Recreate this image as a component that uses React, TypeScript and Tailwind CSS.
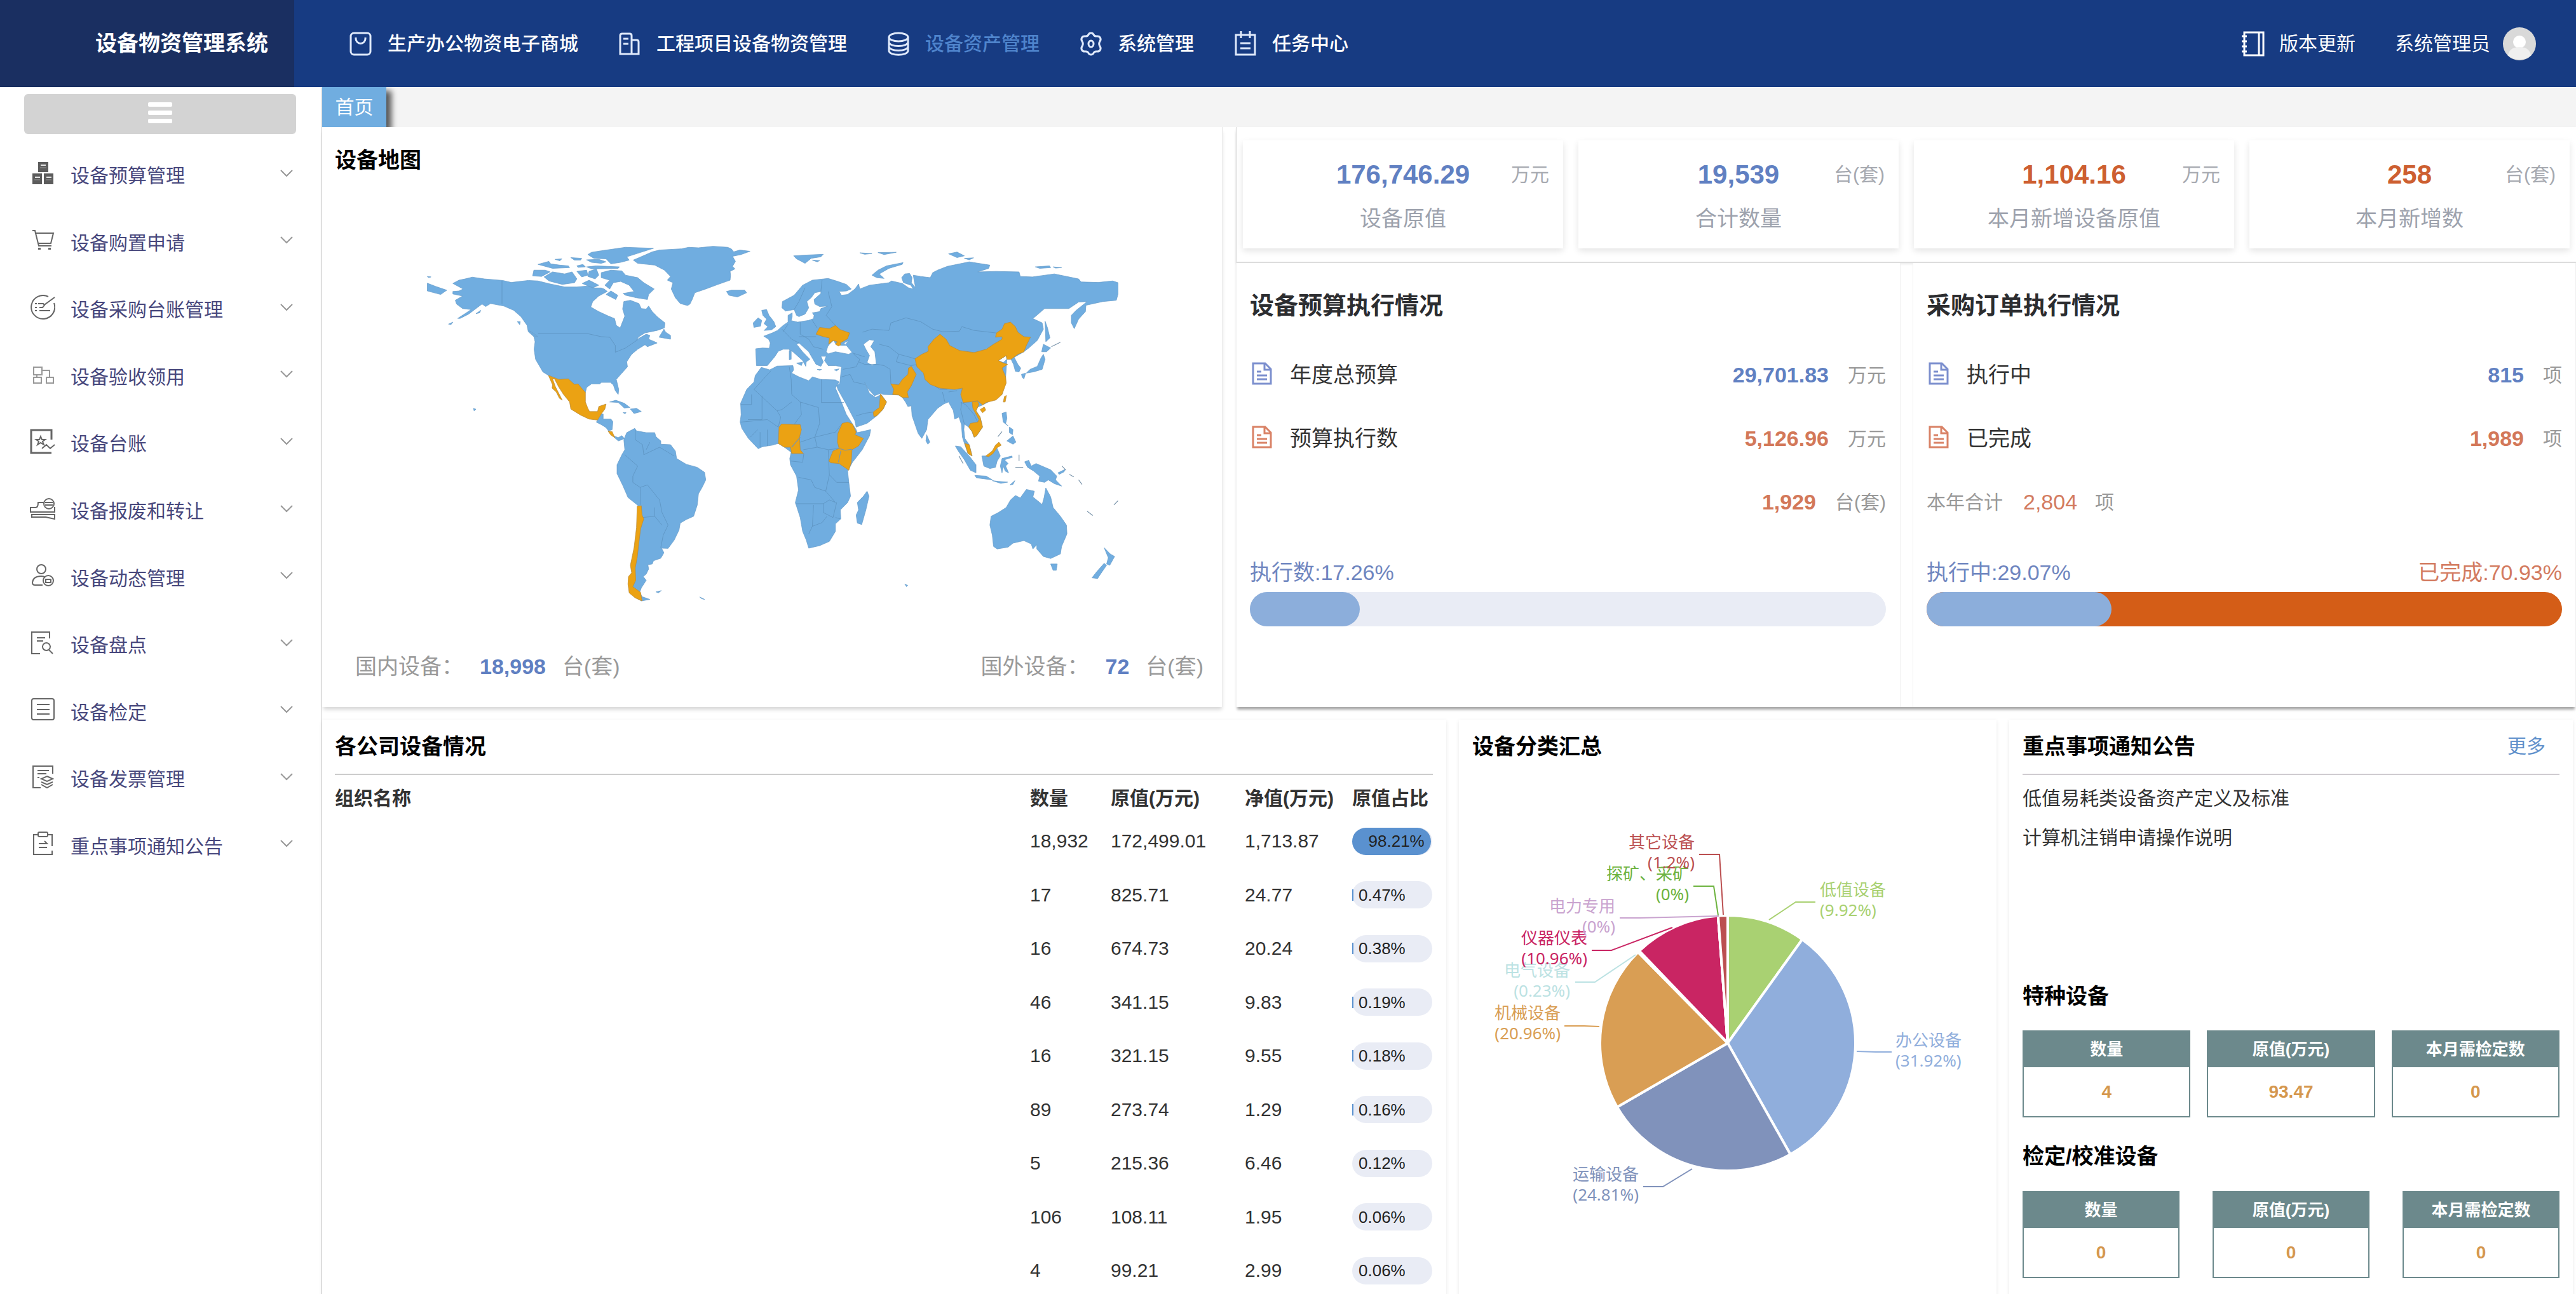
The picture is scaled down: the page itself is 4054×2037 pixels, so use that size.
import React from "react";

const FONT = "font-['Liberation_Sans','Noto_Sans_CJK_SC',sans-serif]";

/* ---------- header icons ---------- */

const navIcon = "h-10 w-9 shrink-0 fill-none stroke-[#dfe9fb] stroke-3";

const BagIcon = () => (
  <svg viewBox="0 0 36 40" className={navIcon}>
    <rect x="2" y="3" width="31" height="34" rx="5" />
    <path d="M10 10v2a7.5 7.5 0 0 0 15 0v-2" />
  </svg>
);
const BuildingIcon = () => (
  <svg viewBox="0 0 36 40" className={navIcon}>
    <path d="M3 36V7q0-3 3-3h12q3 0 3 3v29zM21 14h8q3 0 3 3v19H21M8 12h8M8 20h8" />
  </svg>
);
const DatabaseIcon = () => (
  <svg viewBox="0 0 36 40" className={navIcon}>
    <ellipse cx="18" cy="9.500" rx="15" ry="6.500" />
    <path d="M3 9.500v21c0 9 30 9 30 0v-21M3 17c0 8.500 30 8.500 30 0M3 24c0 8.500 30 8.500 30 0" />
  </svg>
);
const GearIcon = () => (
  <svg viewBox="0 0 36 40" className={navIcon}>
    <path d="M18 3q3 0 4 2.500 1.500 3 5 2.500 4-.5 5.500 2.500t-.5 5.500q-2.500 4 0 8 2 2.500.5 5.500T27 32q-3.500-.5-5 2.500Q21 37 18 37t-4-2.500Q12.500 31.500 9 32q-4 .5-5.500-2.500T4 24q2.500-4 0-8-2-2.500-.5-5.500T9 8q3.500.5 5-2.500Q15 3 18 3z" />
    <ellipse cx="18" cy="20" rx="4" ry="5" />
  </svg>
);
const ClipIcon = () => (
  <svg viewBox="0 0 36 40" className={navIcon}>
    <path d="M3 6h30v31H3zM11 0v11M25 0v11M10 19h16M10 27h16" />
  </svg>
);
const NotebookIcon = () => (
  <svg viewBox="0 0 38 40" className="h-10 w-[38px] shrink-0 fill-none stroke-white stroke-3">
    <path d="M5 2h30v36H5zM28 2v36M1 8h8M1 16h8M1 24h8M1 32h8" />
  </svg>
);
const Avatar = () => (
  <svg viewBox="0 0 52 52" className="size-[52px]">
    <circle cx="26" cy="26" r="26" fill="#d9d9d9" />
    <circle cx="26" cy="23" r="10" fill="#fff" />
    <path d="M8 44c2-10 9-13 18-13s16 3 18 13c-9 9-27 9-36 0z" fill="#efefef" />
  </svg>
);

const NAV = [
  { label: "生产办公物资电子商城", Icon: BagIcon },
  { label: "工程项目设备物资管理", Icon: BuildingIcon },
  { label: "设备资产管理", Icon: DatabaseIcon, active: true },
  { label: "系统管理", Icon: GearIcon },
  { label: "任务中心", Icon: ClipIcon },
];

/* ---------- sidebar ---------- */

const MENU: { label: string; icon: React.ReactNode }[] = [
  {
    label: "设备预算管理",
    icon: (
      <>
        <path fill="#5c5c5c" stroke="none" d="M13 2h16v16H13zM4 20h15v17H4zM22 20h15v17H22z" />
        <path stroke="#e6e6e6" d="M17 7h8M8 26h8M26 26h8" />
        <path stroke="#999" strokeWidth="1" d="M16 11h10M7 30h9M25 30h9" />
      </>
    ),
  },
  {
    label: "设备购置申请",
    icon: (
      <>
        <path d="M4 5h4l6 24h20M8 9h29l-4 16H13" />
        <path d="M13 32h4v3h-4zM29 32h4v3h-4z" fill="#666" stroke="none" />
      </>
    ),
  },
  {
    label: "设备采购台账管理",
    icon: <path d="M29 3A18.500 18.500 0 1 0 38 13M39 4 24 15l-4 5h-5M8 14h3M13 14h8l2 2M8 20h3M8 25h3M15 25h17" />,
  },
  {
    label: "设备验收领用",
    icon: <path stroke="#999" d="M6 9h13v12H6zM6 25h12v9H6zM26 25h11v9H26zM19 14h12v11M11 21v4" />,
  },
  {
    label: "设备台账",
    icon: (
      <>
        <path d="M34 17V2H2v36h32" strokeWidth="3" />
        <path d="m17 12 2 5h5l-4 3 2 5-5-3-5 3 2-5-4-3h5zM19 31l7-6 6 6 7-6" />
      </>
    ),
  },
  {
    label: "设备报废和转让",
    icon: (
      <>
        <path d="M22 10h-9q0 8-4 8H1v7h38v-8M3 29h36v7l-14-3H3z" />
        <circle cx="30" cy="12" r="8" />
        <path d="M24 10h12M24 14h12" />
      </>
    ),
  },
  {
    label: "设备动态管理",
    icon: (
      <>
        <circle cx="18" cy="10" r="7" />
        <path d="M20 35H8q-4 0-4-4 1-10 14-10 4 0 6 2" />
        <circle cx="29" cy="28" r="8" />
        <path d="M25 26h8v5h-8z" />
      </>
    ),
  },
  {
    label: "设备盘点",
    icon: (
      <>
        <path d="M31 13V3H3v34h13M11 12h13M11 17h10" />
        <circle cx="26" cy="26" r="6" />
        <path d="m30 31 6 6" />
      </>
    ),
  },
  {
    label: "设备检定",
    icon: (
      <>
        <rect x="3" y="3" width="35" height="33" rx="3" />
        <path d="M11 12h20M11 20h20M11 27h20" />
      </>
    ),
  },
  {
    label: "设备发票管理",
    icon: (
      <>
        <path d="M36 15V3H5v34h12M12 10h18M12 15h14M12 21h3" />
        <path d="m27 19 9 4-9 4-9-4zM18 28l9 4 9-4M18 32l9 5 9-5" />
      </>
    ),
  },
  {
    label: "重点事项通知公告",
    icon: (
      <>
        <path d="M13 6H6v31h29v-6M28 6h7v18" />
        <rect x="13" y="2" width="15" height="7" rx="2" />
        <path d="M14 20h13l-4-4M27 26H14" />
      </>
    ),
  },
];

function Sidebar() {
  return (
    <aside className="flex w-[507px] shrink-0 flex-col border-r-2 border-[#e6e6e6]">
      <button
        type="button"
        aria-label="折叠菜单"
        className="mt-[11px] mr-[39px] ml-[38px] flex h-[63px] items-center justify-center rounded-md bg-[#d3d3d3]"
      >
        <span className="flex flex-col gap-[6px] pb-1">
          <span className="h-[7px] w-[38px] rounded-xs bg-white" />
          <span className="h-[7px] w-[38px] rounded-xs bg-white" />
          <span className="h-[7px] w-[38px] rounded-xs bg-white" />
        </span>
      </button>
      <nav className="mt-[13px] flex h-[1161px] flex-col">
        {MENU.map((m) => (
          <a key={m.label} href="#" className="flex flex-1 items-center pr-[44px] pl-[47px]">
            <svg viewBox="0 0 40 40" className="mb-2 size-10 shrink-0 fill-none stroke-[#666] stroke-2">
              {m.icon}
            </svg>
            <span className="ml-[24px] flex-1 text-[30px] text-[#47477c]">{m.label}</span>
            <svg viewBox="0 0 20 12" className="mb-2 h-3 w-5 fill-none stroke-[#999] stroke-2">
              <path d="m1 1 9 9 9-9" />
            </svg>
          </a>
        ))}
      </nav>
    </aside>
  );
}

/* ---------- world map ---------- */

const WEST_LAND =
  "M190 218 215 205 240 200 270 193 320 200 395 206 430 214 500 206 540 208 590 220 650 232 700 232 745 228 770 236 800 236 812 240 825 250 790 268 765 290 757 312 790 330 830 348 855 358 862 385 878 395 888 370 897 348 888 320 893 290 920 285 955 298 965 318 985 320 995 308 1010 330 1030 350 1062 375 1060 395 1030 405 980 415 955 430 945 442 985 420 1000 425 995 440 1020 450 1030 455 990 470 980 462 950 480 925 500 905 530 908 550 885 575 862 600 872 640 870 660 858 645 850 622 838 612 800 612 795 618 760 618 740 632 735 652 715 630 583 584 560 570 545 545 530 520 524 480 528 450 523 430 500 410 495 385 470 350 440 325 400 308 345 298 325 310 310 300 285 318 255 340 220 357 210 357 245 335 265 322 230 318 205 300 200 285 230 268 190 260 190 250 215 248 232 240Z" +
  "M785 762 800 738 808 738 808 758 840 758 848 768 845 800 830 805 820 792 800 780 780 770ZM852 825 870 832 885 824 895 835 885 840 870 845 855 832Z" +
  "M835 690 860 683 895 695 918 712 895 714 870 692ZM920 718 945 715 965 728 935 736ZM890 732 902 732 898 737Z" +
  "M893 840 905 812 938 795 945 805 985 812 1020 812 1025 828 1045 845 1045 858 1085 860 1105 885 1110 915 1150 938 1195 950 1225 970 1230 1000 1215 1030 1200 1055 1195 1100 1180 1145 1150 1158 1125 1172 1120 1200 1100 1240 1075 1273 1048 1272 1058 1290 1045 1312 1015 1322 1010 1335 992 1338 995 1355 985 1375 973 1385 985 1400 965 1430 958 1448 968 1465 1000 1476 965 1482 935 1465 925 1430 935 1380 940 1300 948 1200 955 1105 910 1070 890 1025 865 975 865 940 885 900 897 880 895 860Z" +
  "M932 125 980 105 1010 92 1040 85 1130 80 1160 74 1200 76 1260 70 1320 74 1335 80 1345 92 1370 85 1412 90 1375 103 1340 110 1352 130 1340 150 1350 160 1330 170 1332 185 1330 205 1280 222 1230 240 1185 255 1175 280 1165 300 1155 306 1125 298 1105 275 1088 240 1095 215 1072 205 1085 190 1060 165 1020 145 950 138Z" +
  "M745 103 760 94 800 88 900 74 1015 78 960 95 905 112 915 125 880 134 840 140 820 120 770 118ZM540 142 585 130 592 140 630 145 665 148 670 155 600 158ZM523 165 570 165 590 172 555 190 518 188ZM565 192 600 172 650 180 680 172 700 200 690 215 640 222 585 208ZM700 170 740 165 745 185 720 192ZM750 170 780 160 790 185 775 200 745 190ZM740 152 780 148 875 152 870 158 760 160ZM675 115 720 118 715 125 690 125ZM700 148 725 142 735 152 705 154ZM610 122 638 120 630 128ZM740 124 790 122 820 132 800 138 760 134ZM722 218 750 205 790 225 765 236Z" +
  "M800 175 840 165 885 168 900 185 950 195 975 215 1018 240 995 262 990 282 945 275 900 265 890 258 935 250 915 225 880 210 850 215 835 240 815 225 835 205 800 195ZM820 262 840 248 868 265 860 282 840 272Z" +
  "M1315 250 1335 245 1390 245 1398 255 1360 272 1325 265ZM1425 375 1445 355 1460 365 1455 388 1428 393ZM1460 325 1480 322 1490 345 1510 370 1518 390 1500 403 1470 405 1485 390 1470 378 1480 360 1465 345Z" +
  "M1038 432 1058 400 1065 412 1085 425 1085 440ZM85 217 120 230 165 245 140 262 85 248ZM502 405 520 415 540 430 525 427ZM455 370 467 370 465 382ZM172 380 190 372 182 382ZM275 715 285 719 277 725ZM1025 1446 1047 1441 1035 1450ZM1205 1466 1225 1476 1213 1473ZM85 190 100 192 90 195ZM285 338 305 325 300 335Z";

const WEST_ACCENT =
  "M583 584 625 600 665 598 690 620 705 618 715 630 735 652 735 690 745 715 752 728 785 728 790 708 820 698 815 718 800 738 785 762 750 758 715 742 675 718 670 690 645 660 625 630 608 598 600 598 612 630 628 660 640 683 628 675 615 650 598 635 600 622ZM828 806 845 808 856 832 840 822Z" +
  "M948 1105 965 1103 968 1140 975 1155 962 1195 955 1250 948 1310 940 1350 942 1400 930 1425 962 1448 968 1482 940 1470 915 1450 910 1415 912 1385 925 1370 920 1340 935 1270 945 1190Z";

const WEST_BORDERS =
  "M540 418H745L800 430 835 432 858 465V492L900 475 950 442M392 207V300M940 800 940 840 970 860 975 900 1040 870 1100 905M897 900 950 945 930 985 930 1010 960 1030 962 1100M960 1030 990 1020 1040 1080 1050 1130 1075 1180 1055 1220 1045 1270M968 1150 1020 1145 1050 1180M1020 1110 1020 1145M985 880 1000 850";

const EAST_LAND =
  "M-28 478 0 475 28 476 32 455 25 440 5 428 40 415 62 405 85 385 105 372 105 345 122 335 122 350 118 366 145 372 190 365 210 358 212 345 205 335 235 330 240 318 268 308 235 310 215 300 212 282 240 258 240 250 215 255 200 275 182 290 190 315 175 340 150 350 140 345 130 322 95 328 80 315 82 290 130 265 165 225 205 205 270 198 310 210 345 222 365 240 345 248 315 250 325 265 350 262 380 240 395 220 400 240 440 225 520 215 530 208 575 218 600 235 620 240 610 225 580 215 572 195 585 180 605 178 615 195 612 215 630 235 625 215 620 185 650 190 690 195 700 175 720 165 760 150 850 132 935 145 930 158 885 172 960 170 1055 172 1060 190 1110 192 1200 180 1300 200 1310 212 1380 214 1440 208 1462 215 1462 260 1455 285 1400 290 1330 305 1328 330 1300 360 1282 398 1270 375 1270 345 1290 325 1335 290 1300 292 1260 318 1160 318 1112 358 1150 375 1155 400 1130 445 1095 475 1075 490 1035 512 1050 540 1062 555 1055 570 1040 568 1032 540 1022 520 1005 520 1000 590 985 660 905 702 885 710 878 725 895 750 905 790 880 825 870 830 862 808 848 790 830 778 828 800 832 835 850 860 862 905 845 895 832 860 822 830 818 780 808 750 790 758 785 725 765 690 745 698 720 715 680 760 675 800 655 835 640 815 615 745 612 705 598 708 588 690 575 672 560 662 495 660 488 655 460 665 432 635 420 612 440 655 465 672 488 660 510 690 495 720 470 745 430 775 385 790 380 765 345 700 310 640 305 625 318 615 322 575 325 550 300 545 270 545 255 525 262 508 240 508 250 530 240 548 220 540 205 515 190 490 150 455 140 460 165 490 195 520 180 530 178 548 165 525 125 490 108 480 85 480 65 488 50 510 20 545-25 545Z" +
  "M-5 552 30 562 60 547 125 545 128 562 120 575 150 590 190 605 205 590 240 600 300 602 315 610 305 625 300 635 320 680 345 740 385 800 390 812 445 800 440 825 410 880 370 930 350 965 355 1010 362 1065 350 1090 320 1120 322 1155 300 1175 300 1205 275 1245 235 1262 190 1272 180 1240 165 1205 155 1150 135 1090 148 1040 140 985 115 940 112 915 118 890 90 870 65 855 40 862 0 868-18 876-58 835-85 795-92 770-88 740-90 695-65 640-35 610-30 585Z" +
  "M390 1090 415 1065 430 1045 438 1065 425 1120 408 1178 390 1172 385 1140 395 1120ZM675 820 688 850 680 858 672 845Z" +
  "M793 865 815 868 850 905 878 940 878 972 855 962 830 920 805 885ZM873 982 920 985 945 1000 880 992ZM945 1003 970 1006 1008 1009 980 1014ZM1018 1020 1038 1003 1030 1018ZM902 905 925 905 945 885 965 875 978 905 965 925 958 950 935 955 910 945ZM985 915 1025 905 1028 910 995 920 1010 935 1000 945 1012 972 998 965 990 945 985 972 978 945Z" +
  "M985 735 1002 730 1005 755 1000 775 1010 785 990 770ZM1005 845 1030 825 1042 850 1030 858ZM1015 790 1030 800 1028 820 1015 812ZM1078 928 1095 922 1105 945 1125 935 1185 960 1210 985 1205 1000 1230 1025 1200 1015 1175 1000 1160 1010 1135 1005 1140 985 1115 965 1090 950ZM1215 972 1245 958 1240 968 1220 978Z" +
  "M1002 1110 1020 1080 1040 1062 1060 1072 1085 1038 1118 1045 1112 1068 1150 1098 1158 1070 1165 1032 1185 1068 1195 1110 1225 1145 1250 1180 1252 1215 1230 1265 1225 1295 1185 1313 1155 1305 1128 1275 1128 1258 1112 1275 1105 1255 1075 1242 1030 1252 1010 1268 965 1275 950 1265 945 1220 935 1180 940 1145 970 1130ZM1185 1335 1212 1335 1208 1360 1195 1360ZM1405 1270 1430 1295 1448 1305 1428 1340 1415 1335 1422 1310ZM1355 1390 1375 1365 1405 1332 1415 1340 1390 1375 1378 1393Z" +
  "M1148 490 1155 460 1185 475 1168 490ZM1155 500 1162 520 1150 560 1115 570 1085 575 1100 560 1130 548 1145 515ZM1065 580 1082 575 1075 598 1068 592ZM1162 368 1172 395 1182 435 1165 450ZM128 108 180 105 250 102 240 112 200 118 175 138 140 120ZM205 125 235 127 225 132ZM450 185 475 165 510 148 578 135 575 142 520 158 480 180 500 198 470 195ZM765 100 800 93 830 108 800 115ZM830 118 868 116 850 124ZM1122 152 1180 148 1185 155 1140 158ZM1195 152 1230 155 1205 157Z" +
  "M110 485H118V520L110 522ZM140 535 165 532 160 545ZM225 560H243L235 564ZM295 562 315 558 305 566ZM585 1415 597 1420 592 1425ZM400 96 450 99 420 102ZM475 95 550 94 500 103Z";

const EAST_ACCENT =
  "M220 420 235 393 275 398 300 385 320 402 358 415 350 438 320 455 322 462 312 467 300 460 308 450 290 445 272 460 275 435 250 430Z" +
  "M627 518 655 500 682 488 680 470 705 440 730 420 755 440 770 465 810 485 870 493 920 480 950 460 985 440 985 430 958 432 962 415 985 400 995 378 1020 372 1040 390 1050 412 1075 430 1102 432 1085 465 1075 490 1050 500 1022 520 1005 520 1002 505 970 525 990 535 1008 540 985 555 1000 590 1002 615 985 660 960 682 920 692 905 702 885 685 850 690 825 692 815 660 822 635 790 640 730 635 690 620 668 600 662 575 635 550Z" +
  "M862 690 885 687 890 700 878 725 895 750 905 790 880 825 870 830 862 808 848 790 855 775 885 770 890 760 865 715ZM832 855 850 860 862 905 845 895ZM918 905 945 885 958 862 972 850 982 862 965 872 948 895 930 908ZM990 690 995 668 1003 664 998 690ZM895 720 912 710 918 722 905 733Z" +
  "M528 618 560 622 575 600 598 580 600 555 612 548 632 580 612 625 595 650 600 672 575 672 560 662 535 660 540 640ZM485 658 510 690 495 720 470 745 458 748 455 730 480 712Z" +
  "M65 855 68 790 78 778 155 780 160 800 152 830 155 880 168 895 120 895 115 870 90 870ZM328 775 350 770 370 778 385 810 380 820 415 835 395 865 368 880 365 930 355 962 315 935 280 932 273 925 290 885 315 875 308 850 310 815Z";

const EAST_SEAS =
  "M268 470 275 460 292 445 302 460 325 465 345 465 368 492 355 500 300 490 270 498 262 490ZM335 455 355 445 340 462ZM415 460 440 442 460 445 445 470 462 490 468 538 450 545 430 532 440 505 425 480ZM970 525 1002 505 1005 520 990 533Z";

const EAST_BORDERS =
  "M412 412 450 400 520 405 528 375 590 355 650 370 700 400 740 410 810 408 820 390 870 405 960 415M480 460 520 470 560 500 600 510 627 518M395 530 420 540 470 540 500 545 525 560 528 620M325 590 360 580 375 610 420 620M385 745 420 735 455 730M270 250 285 310 262 345 300 385M175 235 150 290 130 322M245 205 240 250M80 400 120 440 150 455M155 372 155 420 190 440 210 470 250 480M105 380 85 410M205 365 225 395M150 430 220 430M375 500 400 520 385 550 330 560M370 495 420 510M560 500 550 530 610 545 640 540M668 600 730 640 760 640M740 650 750 690M765 650 800 645M815 692 835 700 870 740 885 770M830 778 815 720 820 690" +
  "M110 550 118 600 120 660 155 690 230 712M242 600V692H335M230 712 235 775 215 830 225 870M155 690 160 740 130 780M35 565-35 640 60 725 80 720 120 690M60 725 75 750 65 790M-2 665V760H-60M-90 700H-45V660M-90 770 20 760 65 790M-10 870V810M20 865V800M-50 830-20 800M215 830 300 810 328 775M155 850 215 830M168 880 225 870 270 880 315 875M115 925 165 930 170 895M135 1095H250L275 1080 300 1090M210 1100 205 1185 190 1215M205 1185 245 1170 265 1145M148 990 200 1000 215 1030 260 1045 300 1090M270 880 275 980 305 1010 355 1010M275 980 260 1045M300 1150 320 1155M250 1095 250 1130 290 1150 305 1090";

const EAST_DETAIL =
  "M315 875 340 882 368 878M322 885 312 930M968 828 985 808M1188 470 1225 452M1262 978 1280 988M1300 1000 1314 1018M1335 1125 1358 1142M1445 1100 1462 1083M1055 900V925M1040 950H1072M808 905 825 935M1232 945 1248 962M120 870 155 830";

function WorldMap() {
  return (
    <svg viewBox="660 380 1110 570" className="h-[570px] w-full" role="img" aria-label="世界设备分布地图">
      <g strokeLinejoin="round" fill="none" stroke="#6a9fcb" strokeWidth="2">
        <g transform="translate(640 360) scale(.3827 .3954)">
          <path d={WEST_LAND} fill="#70ade0" />
          <path d={WEST_BORDERS} stroke="#5b91bf" />
          <path d={WEST_ACCENT} fill="#eba213" stroke="#b98b3a" />
        </g>
        <g transform="translate(1200 360) scale(.3827 .3954)">
          <path d={EAST_LAND} fill="#70ade0" />
          <path d={EAST_SEAS} fill="#fff" />
          <path d={EAST_BORDERS} stroke="#5b91bf" />
          <path d={EAST_ACCENT} fill="#eba213" stroke="#b98b3a" />
          <path d={EAST_DETAIL} stroke="#7b95ab" strokeWidth="3" />
        </g>
      </g>
    </svg>
  );
}

/* ---------- pie chart ---------- */

const SLICES = [
  { name: "低值设备", text: "(9.92%)", value: 9.92, color: "#a9d172", x: 2864, y: 1402, side: "start", line: "2784,1448 2826,1420 2857,1420" },
  { name: "办公设备", text: "(31.92%)", value: 31.92, color: "#90aedc", x: 2983, y: 1639, side: "start", line: "2922,1655 2952,1656 2977,1656" },
  { name: "运输设备", text: "(24.81%)", value: 24.81, color: "#8092bb", x: 2579, y: 1850, side: "end", line: "2663,1840 2617,1868 2586,1868" },
  { name: "机械设备", text: "(20.96%)", value: 20.96, color: "#d99e54", x: 2456, y: 1596, side: "end", line: "2517,1616 2493,1615 2462,1615" },
  { name: "电气设备", text: "(0.23%)", value: 0.23, color: "#bce2e3", x: 2471, y: 1529, side: "end", line: "2574,1503 2510,1546 2479,1546" },
  { name: "仪器仪表", text: "(10.96%)", value: 10.96, color: "#c92563", x: 2498, y: 1478, side: "end", line: "2632,1460 2536,1496 2505,1496" },
  { name: "电力专用", text: "(0%)", value: 0, color: "#c9a3cf", x: 2542, y: 1428, side: "end", line: "2705,1442 2580,1445 2549,1445" },
  { name: "探矿、采矿", text: "(0%)", value: 0, color: "#6db33f", x: 2658, y: 1377, side: "end", line: "2704,1441 2697,1395 2665,1395" },
  { name: "其它设备", text: "(1.2%)", value: 1.2, color: "#bb4f50", x: 2667, y: 1327, side: "end", line: "2712,1440 2706,1345 2674,1345" },
] as const;

function PieChart() {
  const cx = 2719;
  const cy = 1642;
  const r = 201;
  const at = (pct: number) => {
    const a = (pct / 100) * Math.PI * 2;
    return `${(cx + r * Math.sin(a)).toFixed(1)} ${(cy - r * Math.cos(a)).toFixed(1)}`;
  };
  let acc = 0;
  return (
    <svg
      viewBox="2296 1290 846 640"
      className="mt-[90px] h-[640px] w-full font-['Noto_Sans','Noto_Sans_CJK_SC',sans-serif] text-[26px]"
      role="img"
      aria-label="设备分类汇总饼图"
    >
      {SLICES.map((s) => {
        const from = acc;
        acc += s.value;
        return (
          <path
            key={s.name}
            d={`M${cx} ${cy}L${at(from)}A${r} ${r} 0 0 1 ${at(acc)}Z`}
            fill={s.color}
            stroke="#fff"
            strokeWidth="4"
            strokeLinejoin="round"
          />
        );
      })}
      {SLICES.map((s) => (
        <g key={s.name}>
          <polyline points={s.line} fill="none" stroke={s.color} strokeWidth="2" />
          <text x={s.x} y={s.y + 8} textAnchor={s.side} fill={s.color}>
            {s.name}
          </text>
          <text x={s.x} y={s.y + 40} textAnchor={s.side} fill={s.color}>
            {s.text}
          </text>
        </g>
      ))}
    </svg>
  );
}

/* ---------- shared parts ---------- */

function CardTitle({ children }: { children: React.ReactNode }) {
  return <h2 className="h-[50px] text-[34px] leading-[50px] font-bold text-black">{children}</h2>;
}

function DocIcon({ tone }: { tone: "blue" | "red" }) {
  return (
    <svg
      viewBox="0 0 32 36"
      className={
        "mb-1 h-9 w-8 shrink-0 fill-none stroke-3 " + (tone === "blue" ? "stroke-[#7c8fce]" : "stroke-[#d98266]")
      }
    >
      <path d="M2 2h19l9 9v23H2zM20 2v10h10M8 15h7M8 21h16M8 27h16" />
    </svg>
  );
}

const STATS = [
  { value: "176,746.29", unit: "万元", label: "设备原值", cls: "text-[#6080c2]" },
  { value: "19,539", unit: "台(套)", label: "合计数量", cls: "text-[#6080c2]" },
  { value: "1,104.16", unit: "万元", label: "本月新增设备原值", cls: "text-[#cd5f31]" },
  { value: "258", unit: "台(套)", label: "本月新增数", cls: "text-[#cd5f31]" },
];

function StatCard({ value, unit, label, cls }: (typeof STATS)[number]) {
  return (
    <div className="flex h-[170px] flex-col bg-white px-[22px] pt-[22px] shadow-[0_4px_10px_rgba(0,0,0,0.11)]">
      <div className="grid h-[50px] grid-cols-[1fr_auto_1fr] items-center">
        <span />
        <span className={"text-[42px] font-bold " + cls}>{value}</span>
        <span className="text-right text-[30px] text-[#a6a9b0]">{unit}</span>
      </div>
      <div className="mt-[26px] text-center text-[34px] leading-[50px] text-[#9da2ad]">{label}</div>
    </div>
  );
}

function MetricRow({
  tone,
  label,
  value,
  unit,
}: {
  tone: "blue" | "red";
  label?: string;
  value: string;
  unit: string;
}) {
  return (
    <div className="flex h-[100px] items-center">
      {label && (
        <>
          <span className="ml-[3px]">
            <DocIcon tone={tone} />
          </span>
          <span className="ml-[28px] text-[34px] text-[#333]">{label}</span>
        </>
      )}
      <span className={"ml-auto text-[34px] font-bold " + (tone === "blue" ? "text-[#6080c2]" : "text-[#d37859]")}>
        {value}
      </span>
      <span className="ml-[30px] text-[30px] text-[#999]">{unit}</span>
    </div>
  );
}

const panel = "border-x border-[#f0f0f0] bg-white pt-[41px] pl-[21px]";

/* ---------- company table ---------- */

const ROWS: [string, string, string, string][] = [
  ["18,932", "172,499.01", "1,713.87", "98.21%"],
  ["17", "825.71", "24.77", "0.47%"],
  ["16", "674.73", "20.24", "0.38%"],
  ["46", "341.15", "9.83", "0.19%"],
  ["16", "321.15", "9.55", "0.18%"],
  ["89", "273.74", "1.29", "0.16%"],
  ["5", "215.36", "6.46", "0.12%"],
  ["106", "108.11", "1.95", "0.06%"],
  ["4", "99.21", "2.99", "0.06%"],
];

function SharePill({ value }: { value: string }) {
  const pct = parseFloat(value);
  const wide = pct > 50;
  return (
    <div className="flex h-[43px] w-[126px] items-center rounded-full bg-[#e9ecf5] text-[26px] text-[#222]">
      {wide ? (
        <div
          className="flex h-full items-center justify-end rounded-full bg-[#5a91cf] pr-[10px]"
          style={{ width: `${pct}%` }}
        >
          {value}
        </div>
      ) : (
        <>
          <span className={pct > 0.15 ? "h-[18px] w-[2px] bg-[#5a91cf]" : "w-[2px]"} />
          <span className="ml-[8px]">{value}</span>
        </>
      )}
    </div>
  );
}

function CompanyTable() {
  return (
    <table className="w-full table-fixed text-left text-[30px] leading-[36px] text-[#333]">
      <colgroup>
        <col />
        <col className="w-[127px]" />
        <col className="w-[211px]" />
        <col className="w-[169px]" />
        <col className="w-[127px]" />
      </colgroup>
      <thead>
        <tr className="h-[62px] text-[#333]">
          <th className="pt-[12px]">组织名称</th>
          <th className="pt-[12px]">数量</th>
          <th className="pt-[12px] whitespace-nowrap">原值(万元)</th>
          <th className="pt-[12px] whitespace-nowrap">净值(万元)</th>
          <th className="pt-[12px] whitespace-nowrap">原值占比</th>
        </tr>
      </thead>
      <tbody>
        {ROWS.map((r, i) => (
          <tr key={i} className="odd:h-[84px] even:h-[85px]">
            <td />
            <td>{r[0]}</td>
            <td>{r[1]}</td>
            <td>{r[2]}</td>
            <td>
              <SharePill value={r[3]} />
            </td>
          </tr>
        ))}
      </tbody>
    </table>
  );
}

function CountBox({ label, value }: { label: string; value: string }) {
  return (
    <dl className="border-2 border-[#6c898c] text-center">
      <dt className="h-[56px] bg-[#6c898c] text-[26px] leading-[56px] font-bold text-white">{label}</dt>
      <dd className="h-[77px] text-[28px] leading-[77px] font-bold text-[#d5974e]">{value}</dd>
    </dl>
  );
}

const card = "bg-white pt-[17px] shadow-[0_2px_6px_rgba(0,0,0,0.09)]";

export default function App() {
  return (
    <div className={"flex h-screen flex-col overflow-hidden bg-white " + FONT}>
      <header className="flex h-[137px] shrink-0 items-center bg-[#173b82] text-[30px] text-white">
        <div className="flex h-full w-[463px] items-center bg-[#1a2f61] pl-[150px]">
          <h1 className="text-[34px] font-bold">设备物资管理系统</h1>
        </div>
        <nav className="ml-[87px] flex items-center gap-[63px]">
          {NAV.map(({ label, Icon, active }) => (
            <a
              key={label}
              href="#"
              className={"flex items-center gap-6 font-medium " + (active ? "text-[#4f84cc]" : "text-white")}
            >
              <Icon />
              {label}
            </a>
          ))}
        </nav>
        <div className="mr-[63px] ml-auto flex items-center">
          <a href="#" className="flex items-center gap-[22px]">
            <NotebookIcon />
            版本更新
          </a>
          <button type="button" className="ml-[62px] flex items-center gap-[20px]">
            系统管理员
            <Avatar />
          </button>
        </div>
      </header>

      <div className="flex min-h-0 flex-1">
        <Sidebar />
        <main className="flex min-w-0 flex-1 flex-col">
          <div className="flex h-[63px] shrink-0 overflow-hidden bg-[#f4f4f4]">
            <a
              href="#"
              className="flex w-[101px] items-center justify-center bg-[#70ade0] text-[30px] text-white shadow-[8px_6px_9px_rgba(0,0,0,0.65)]"
            >
              首页
            </a>
          </div>

          <div className="grid h-[913px] shrink-0 grid-cols-[1418fr_2109fr] gap-5">
            <section className="flex flex-col border-r-2 border-[#efefef] pt-[27px] shadow-[0_6px_6px_-2px_rgba(0,0,0,0.16)]">
              <div className="pl-[20px]">
                <CardTitle>设备地图</CardTitle>
              </div>
              <div className="mt-[103px]">
                <WorldMap />
              </div>
              <div className="mt-[74px] flex h-[50px] items-center justify-between pr-[29px] pl-[52px] text-[34px] text-[#999]">
                <div className="flex gap-[26px]">
                  <span>国内设备：</span>
                  <b className="text-[#6080c2]">18,998</b>
                  <span>台(套)</span>
                </div>
                <div className="flex gap-[26px]">
                  <span>国外设备：</span>
                  <b className="text-[#6080c2]">72</b>
                  <span>台(套)</span>
                </div>
              </div>
            </section>

            <div className="flex min-w-0 flex-col shadow-[0_6px_4px_-2px_rgba(0,0,0,0.35)]">
              <section className="grid h-[214px] shrink-0 grid-cols-4 gap-6 border-b-2 border-l-2 border-b-[#dcdcdc] border-l-[#e8e8e8] pt-[21px] pr-[10px] pl-[9px] shadow-[0_2px_3px_rgba(0,0,0,0.08)]">
                {STATS.map((s) => (
                  <StatCard key={s.label} {...s} />
                ))}
              </section>
              <div className="grid flex-1 grid-cols-[1046fr_1044fr] gap-[19px]">
                <section className={panel + " pr-[22px]"}>
                  <h2 className="text-[38px] leading-[52px] font-bold text-[#2c2d30]">设备预算执行情况</h2>
                  <div className="mt-[33px]">
                    <MetricRow tone="blue" label="年度总预算" value="29,701.83" unit="万元" />
                    <MetricRow tone="red" label="预算执行数" value="5,126.96" unit="万元" />
                    <MetricRow tone="red" value="1,929" unit="台(套)" />
                  </div>
                  <div className="mt-[39px] text-[34px] leading-[44px] text-[#6f86c0]">执行数:17.26%</div>
                  <div className="mt-[9px] h-[54px] rounded-full bg-[#e9ecf5]">
                    <div className="h-full rounded-full bg-[#8caedb]" style={{ width: "17.26%" }} />
                  </div>
                </section>
                <section className={panel + " pr-[21px]"}>
                  <h2 className="text-[38px] leading-[52px] font-bold text-[#2c2d30]">采购订单执行情况</h2>
                  <div className="mt-[33px]">
                    <MetricRow tone="blue" label="执行中" value="815" unit="项" />
                    <MetricRow tone="red" label="已完成" value="1,989" unit="项" />
                    <div className="flex h-[100px] items-center text-[30px] text-[#999]">
                      <span>本年合计</span>
                      <span className="ml-[32px] text-[34px] text-[#d37b60]">2,804</span>
                      <span className="ml-[28px]">项</span>
                    </div>
                  </div>
                  <div className="mt-[39px] flex justify-between text-[34px] leading-[44px]">
                    <span className="text-[#6f86c0]">执行中:29.07%</span>
                    <span className="text-[#d37b60]">已完成:70.93%</span>
                  </div>
                  <div className="mt-[9px] h-[54px] rounded-full bg-[#d45d17]">
                    <div className="h-full rounded-full bg-[#8caedb]" style={{ width: "29.07%" }} />
                  </div>
                </section>
              </div>
            </div>
          </div>

          <div className="mt-5 grid min-h-0 flex-1 grid-cols-[1769fr_846fr_887fr] gap-5 pr-[5px]">
            <section className={card + " pr-[21px] pl-[20px]"}>
              <div className="border-b-2 border-[#cccccc] pb-[18px]">
                <CardTitle>各公司设备情况</CardTitle>
              </div>
              <CompanyTable />
            </section>

            <section className={card}>
              <div className="pl-[21px]">
                <CardTitle>设备分类汇总</CardTitle>
              </div>
              <PieChart />
            </section>

            <section className={card + " pr-[21px] pl-[21px]"}>
              <div className="flex items-center justify-between border-b-2 border-[#cfcbd0] pr-[22px] pb-[18px]">
                <CardTitle>重点事项通知公告</CardTitle>
                <a href="#" className="text-[30px] leading-[50px] text-[#5f90cb]">
                  更多
                </a>
              </div>
              <ul className="mt-[6px] text-[30px] leading-[62px] text-[#333]">
                <li>低值易耗类设备资产定义及标准</li>
                <li>计算机注销申请操作说明</li>
              </ul>
              <div className="mt-[193px]">
                <CardTitle>特种设备</CardTitle>
              </div>
              <div className="mt-[29px] grid grid-cols-3 gap-[26px]">
                <CountBox label="数量" value="4" />
                <CountBox label="原值(万元)" value="93.47" />
                <CountBox label="本月需检定数" value="0" />
              </div>
              <div className="mt-[36px]">
                <CardTitle>检定/校准设备</CardTitle>
              </div>
              <div className="mt-[30px] grid grid-cols-3 gap-[52px]">
                <CountBox label="数量" value="0" />
                <CountBox label="原值(万元)" value="0" />
                <CountBox label="本月需检定数" value="0" />
              </div>
            </section>
          </div>
        </main>
      </div>
    </div>
  );
}
